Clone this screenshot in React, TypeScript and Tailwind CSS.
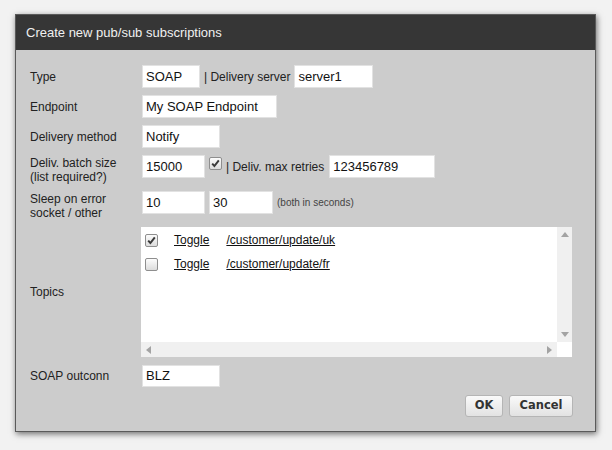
import React from "react";

const font = { fontFamily: '"Liberation Sans", Arial, sans-serif' };

function Box({ checked }: { checked?: boolean }) {
  return (
    <span className="inline-flex h-[13px] w-[13px] items-center justify-center rounded-[2px] border border-[#8e8e8e] bg-gradient-to-b from-[#fcfcfc] to-[#dcdcdc]">
      {checked && (
        <svg width="11" height="11" viewBox="0 0 11 11">
          <path d="M2.2 5.6 L4.4 8 L8.8 2.4" fill="none" stroke="#3a3a3a" strokeWidth="2" />
        </svg>
      )}
    </span>
  );
}

function Input({ value, w, h = "h-[23px]" }: { value: string; w: string; h?: string }) {
  return (
    <div
      className={`${w} ${h} flex items-center border border-[#e2e2e2] bg-white pl-[3px] text-[13px] text-[#111]`}
    >
      {value}
    </div>
  );
}

export default function App() {
  return (
    <div className="h-[450px] w-[612px] bg-[#f2f2f2] pt-[14px] pl-[15px]" style={font}>
      <div className="w-[581px] border border-[#5a5a5a] bg-[#cccccc] shadow-[1px_2px_6px_rgba(0,0,0,0.55)]">
        <div className="flex h-[35px] items-center bg-[#363636] pl-[10px] text-[13px] text-[#f0f0f0]">
          Create new pub/sub subscriptions
        </div>
        <div className="px-[14px] pt-[15px] pb-[14px] text-[12px] text-[#222]">
          {/* Type */}
          <div className="flex h-[23px] items-center">
            <div className="w-[112px]">Type</div>
            <Input value="SOAP" w="w-[58px]" />
            <span className="ml-[4px] mr-[4px]">| Delivery server</span>
            <Input value="server1" w="w-[79px]" />
          </div>
          <div className="mt-[7px] flex h-[23px] items-center">
            <div className="w-[112px]">Endpoint</div>
            <Input value="My SOAP Endpoint" w="w-[135px]" />
          </div>
          <div className="mt-[7px] flex h-[23px] items-center">
            <div className="w-[112px]">Delivery method</div>
            <Input value="Notify" w="w-[78px]" />
          </div>
          <div className="mt-[7px] flex items-start">
            <div className="w-[112px] pt-[1px] leading-[14px]">
              Deliv. batch size
              <br />
              (list required?)
            </div>
            <div className="flex h-[23px] items-center">
              <Input value="15000" w="w-[63px]" />
              <span className="ml-[4px] -mt-[4px]">
                <Box checked />
              </span>
              <span className="ml-[4px] mr-[5px]">| Deliv. max retries</span>
              <Input value="123456789" w="w-[106px]" />
            </div>
          </div>
          <div className="mt-[7px] flex items-start">
            <div className="w-[112px] pt-[1px] leading-[14px]">
              Sleep on error
              <br />
              socket / other
            </div>
            <div className="flex h-[23px] items-center">
              <Input value="10" w="w-[63px]" />
              <div className="ml-[4px]">
                <Input value="30" w="w-[64px]" />
              </div>
              <span className="ml-[4px] text-[10px] text-[#444]">(both in seconds)</span>
            </div>
          </div>
          <div className="mt-[7px] flex items-center">
            <div className="w-[111px]">Topics</div>
            <div className="flex h-[130px] w-[431px] flex-col bg-white">
              <div className="flex flex-1">
                <div className="flex-1 pt-[6px] pl-[4px] text-[12px] text-[#111]">
                  <div className="flex h-[14px] items-center">
                    <Box checked />
                    <span className="ml-[16px] underline">Toggle</span>
                    <span className="ml-[17px] underline">/customer/update/uk</span>
                  </div>
                  <div className="mt-[10px] flex h-[14px] items-center">
                    <Box />
                    <span className="ml-[16px] underline">Toggle</span>
                    <span className="ml-[17px] underline">/customer/update/fr</span>
                  </div>
                </div>
                <div className="flex w-[15px] flex-col items-center justify-between bg-[#f0f0f0] py-[5px]">
                  <svg width="8" height="5" viewBox="0 0 8 5">
                    <path d="M4 0 L8 5 L0 5 Z" fill="#a3a3a3" />
                  </svg>
                  <svg width="8" height="5" viewBox="0 0 8 5">
                    <path d="M0 0 L8 0 L4 5 Z" fill="#a3a3a3" />
                  </svg>
                </div>
              </div>
              <div className="flex h-[15px]">
                <div className="flex flex-1 items-center justify-between bg-[#f0f0f0] px-[5px]">
                  <svg width="5" height="8" viewBox="0 0 5 8">
                    <path d="M5 0 L5 8 L0 4 Z" fill="#a3a3a3" />
                  </svg>
                  <svg width="5" height="8" viewBox="0 0 5 8">
                    <path d="M0 0 L5 4 L0 8 Z" fill="#a3a3a3" />
                  </svg>
                </div>
                <div className="w-[15px] bg-white" />
              </div>
            </div>
          </div>
          <div className="mt-[8px] flex h-[22px] items-center">
            <div className="w-[112px]">SOAP outconn</div>
            <Input value="BLZ" w="w-[78px]" h="h-[22px]" />
          </div>
          <div className="mt-[8px] flex justify-end gap-[6px] pr-[8px]">
            <button
              className="h-[22px] w-[38px] rounded-[3px] border border-[#b5b5b5] bg-gradient-to-b from-[#fafafa] to-[#e2e2e2] text-[11.5px] font-bold text-[#333]"
              style={{ fontFamily: '"DejaVu Sans", Verdana, sans-serif' }}
            >
              OK
            </button>
            <button
              className="h-[22px] w-[64px] rounded-[3px] border border-[#b5b5b5] bg-gradient-to-b from-[#fafafa] to-[#e2e2e2] text-[11.5px] font-bold text-[#333]"
              style={{ fontFamily: '"DejaVu Sans", Verdana, sans-serif' }}
            >
              Cancel
            </button>
          </div>
        </div>
      </div>
    </div>
  );
}
